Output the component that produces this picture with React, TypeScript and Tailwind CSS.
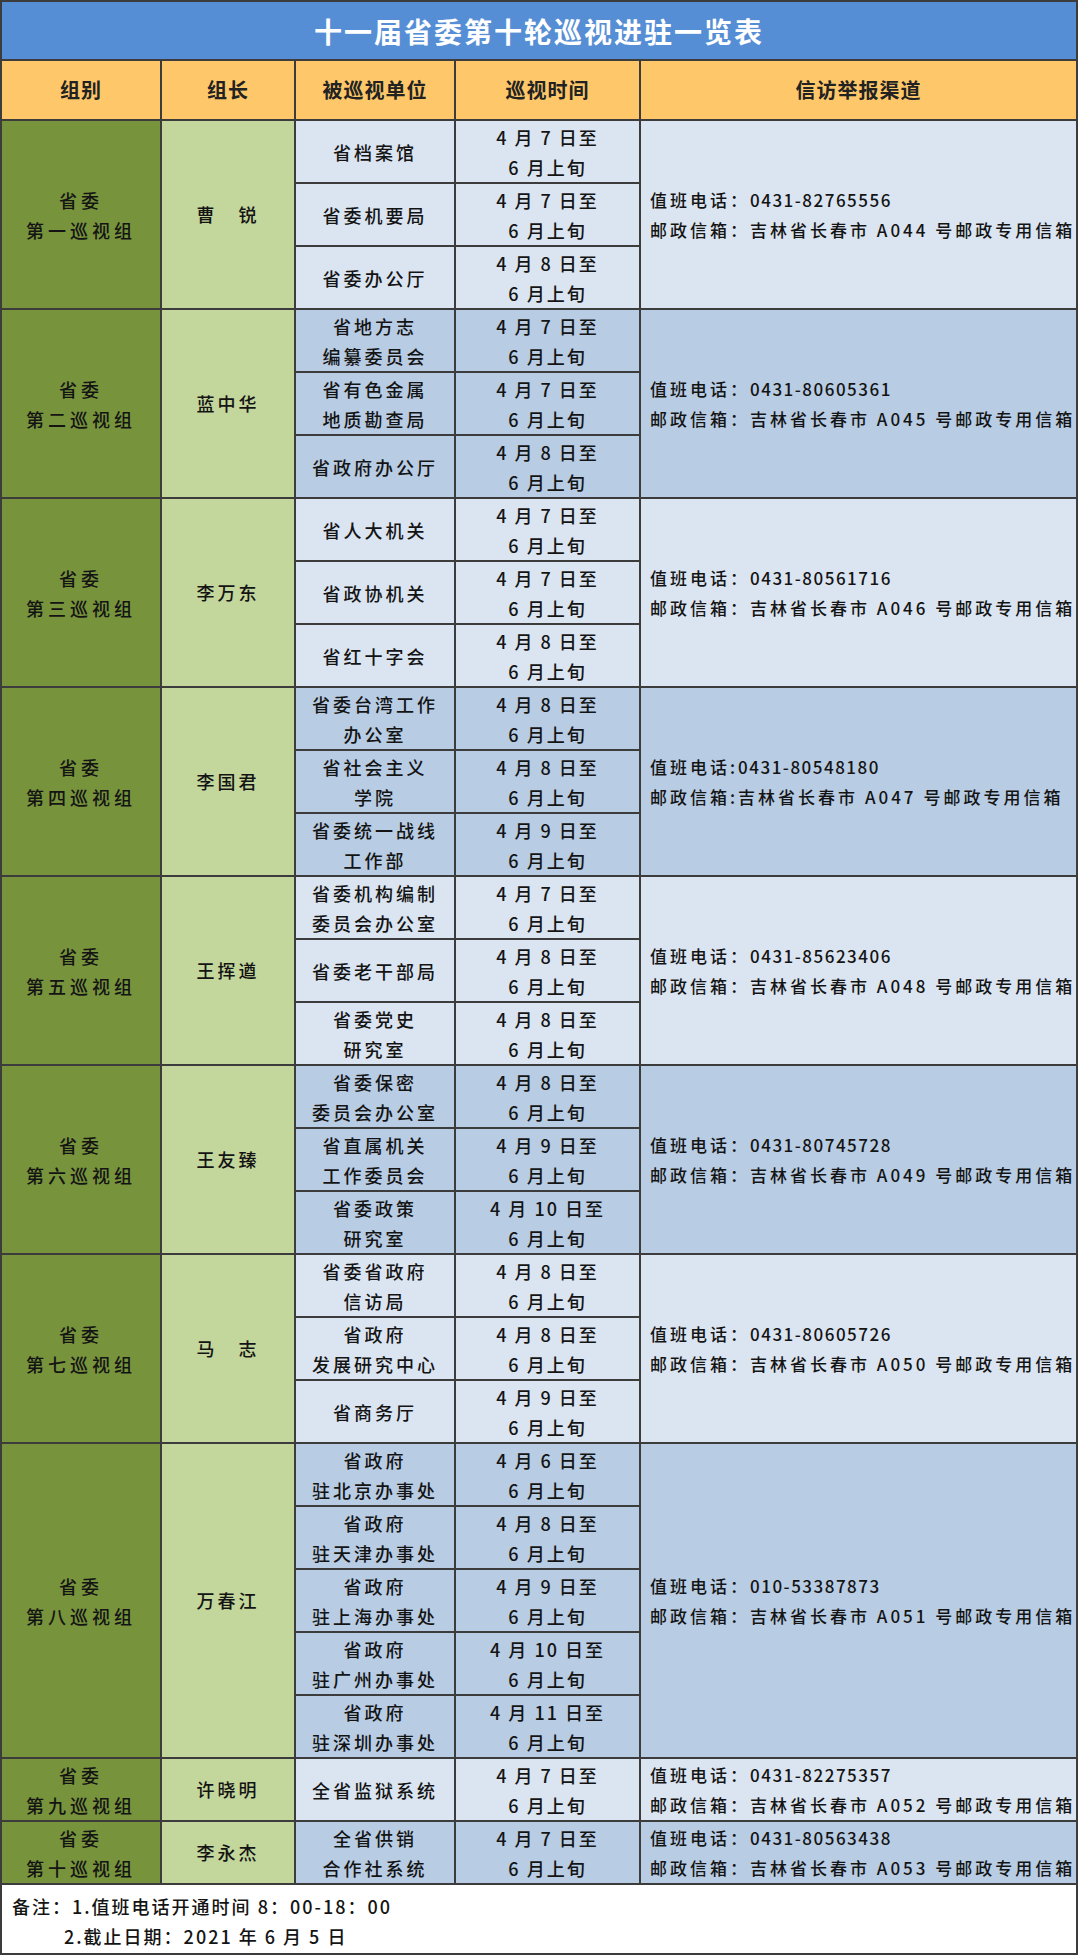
type Unit = { name: string[]; date: string }

type Group = {
  no: string
  leader: string
  units: Unit[]
  phone: string
  box: string
  dark: boolean
  half?: boolean
}

const groups: Group[] = [
  {
    no: "第一巡视组",
    leader: "曹　锐",
    units: [
      { name: ["省档案馆"], date: "7" },
      { name: ["省委机要局"], date: "7" },
      { name: ["省委办公厅"], date: "8" },
    ],
    phone: "0431-82765556",
    box: "A044",
    dark: false,
  },
  {
    no: "第二巡视组",
    leader: "蓝中华",
    units: [
      { name: ["省地方志", "编纂委员会"], date: "7" },
      { name: ["省有色金属", "地质勘查局"], date: "7" },
      { name: ["省政府办公厅"], date: "8" },
    ],
    phone: "0431-80605361",
    box: "A045",
    dark: true,
  },
  {
    no: "第三巡视组",
    leader: "李万东",
    units: [
      { name: ["省人大机关"], date: "7" },
      { name: ["省政协机关"], date: "7" },
      { name: ["省红十字会"], date: "8" },
    ],
    phone: "0431-80561716",
    box: "A046",
    dark: false,
  },
  {
    no: "第四巡视组",
    leader: "李国君",
    units: [
      { name: ["省委台湾工作", "办公室"], date: "8" },
      { name: ["省社会主义", "学院"], date: "8" },
      { name: ["省委统一战线", "工作部"], date: "9" },
    ],
    phone: "0431-80548180",
    box: "A047",
    dark: true,
    half: true,
  },
  {
    no: "第五巡视组",
    leader: "王挥遒",
    units: [
      { name: ["省委机构编制", "委员会办公室"], date: "7" },
      { name: ["省委老干部局"], date: "8" },
      { name: ["省委党史", "研究室"], date: "8" },
    ],
    phone: "0431-85623406",
    box: "A048",
    dark: false,
  },
  {
    no: "第六巡视组",
    leader: "王友臻",
    units: [
      { name: ["省委保密", "委员会办公室"], date: "8" },
      { name: ["省直属机关", "工作委员会"], date: "9" },
      { name: ["省委政策", "研究室"], date: "10" },
    ],
    phone: "0431-80745728",
    box: "A049",
    dark: true,
  },
  {
    no: "第七巡视组",
    leader: "马　志",
    units: [
      { name: ["省委省政府", "信访局"], date: "8" },
      { name: ["省政府", "发展研究中心"], date: "8" },
      { name: ["省商务厅"], date: "9" },
    ],
    phone: "0431-80605726",
    box: "A050",
    dark: false,
  },
  {
    no: "第八巡视组",
    leader: "万春江",
    units: [
      { name: ["省政府", "驻北京办事处"], date: "6" },
      { name: ["省政府", "驻天津办事处"], date: "8" },
      { name: ["省政府", "驻上海办事处"], date: "9" },
      { name: ["省政府", "驻广州办事处"], date: "10" },
      { name: ["省政府", "驻深圳办事处"], date: "11" },
    ],
    phone: "010-53387873",
    box: "A051",
    dark: true,
  },
  {
    no: "第九巡视组",
    leader: "许晓明",
    units: [{ name: ["全省监狱系统"], date: "7" }],
    phone: "0431-82275357",
    box: "A052",
    dark: false,
  },
  {
    no: "第十巡视组",
    leader: "李永杰",
    units: [{ name: ["全省供销", "合作社系统"], date: "7" }],
    phone: "0431-80563438",
    box: "A053",
    dark: true,
  },
]

const spans: Record<number, string> = {
  1: "row-span-1",
  3: "row-span-3",
  5: "row-span-5",
}

function GroupRows({ g }: { g: Group }) {
  const span = spans[g.units.length]
  const bg = g.dark ? "bg-[#b8cce4]" : "bg-[#dbe5f1]"
  const colon = g.half ? ":" : "："

  return (
    <>
      <div className={`${span} bg-[#77933c] flex flex-col items-center justify-center leading-[30px] tracking-[4px]`}>
        <span>省委</span>
        <span>{g.no}</span>
      </div>
      <div className={`${span} bg-[#c3d69b] flex items-center justify-center tracking-[3px]`}>
        {g.leader}
      </div>
      {g.units.map((u, i) => (
        <UnitRow key={i} unit={u} bg={bg}>
          {i === 0 && (
            <div className={`${span} ${bg} flex flex-col justify-center pl-[9px] leading-[30px] tracking-[3px] text-[17px] whitespace-nowrap`}>
              <span>
                值班电话{colon}
                <span className="tracking-[1.5px]">{g.phone}</span>
              </span>
              <span>
                邮政信箱{colon}吉林省长春市 {g.box} 号邮政专用信箱
              </span>
            </div>
          )}
        </UnitRow>
      ))}
    </>
  )
}

function UnitRow({
  unit,
  bg,
  children,
}: {
  unit: Unit
  bg: string
  children?: React.ReactNode
}) {
  return (
    <>
      <div className={`${bg} flex flex-col items-center justify-center leading-[30px] tracking-[3px]`}>
        {unit.name.map((n) => (
          <span key={n}>{n}</span>
        ))}
      </div>
      <div className={`${bg} flex flex-col items-center justify-center leading-[30px] tracking-[2px]`}>
        <span>4 月 {unit.date} 日至</span>
        <span>6 月上旬</span>
      </div>
      {children}
    </>
  )
}

export default function App() {
  return (
    <div className="min-h-[1955px] bg-white font-['Noto_Sans_CJK_SC',sans-serif] text-[18px] font-medium text-[#141414]">
      <div className="grid w-[1078px] grid-cols-[158px_132px_158px_183px_1fr] grid-rows-[57px_58px_repeat(28,61px)_68px] gap-[2px] bg-[#3c3c3c] p-[2px]">
        <div className="col-span-5 flex items-center justify-center bg-[#558ed5] text-[28px] font-bold tracking-[2px] text-white">
          十一届省委第十轮巡视进驻一览表
        </div>

        {["组别", "组长", "被巡视单位", "巡视时间", "信访举报渠道"].map((h) => (
          <div
            key={h}
            className="flex items-center justify-center bg-[#fec86a] text-[20px] font-bold tracking-[1px] text-[#222]"
          >
            {h}
          </div>
        ))}

        {groups.map((g) => (
          <GroupRows key={g.no} g={g} />
        ))}

        <div className="col-span-5 flex flex-col justify-center bg-white pt-[4px] leading-[30px] tracking-[2px]">
          <span className="pl-[10px]">备注：1.值班电话开通时间 8：00-18：00</span>
          <span className="pl-[62px]">2.截止日期：2021 年 6 月 5 日</span>
        </div>
      </div>
    </div>
  )
}
